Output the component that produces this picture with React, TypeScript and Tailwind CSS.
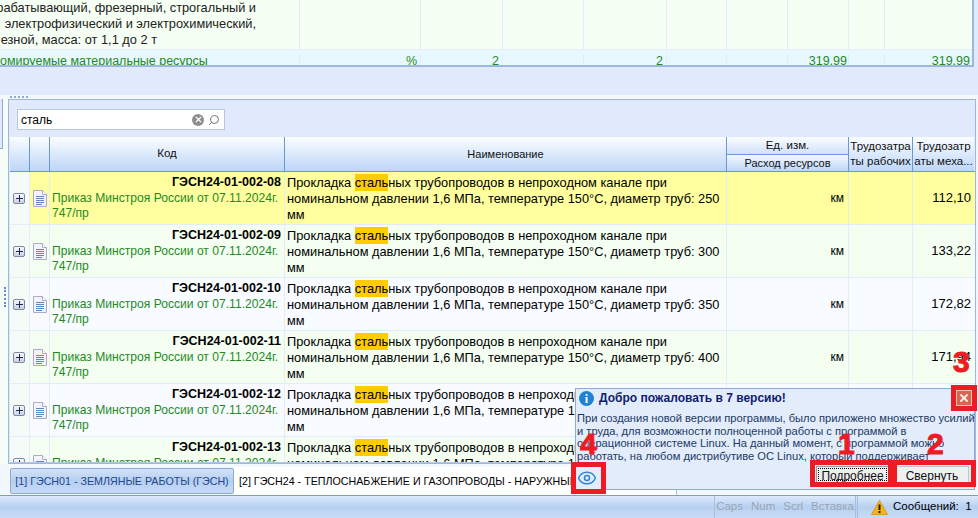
import React from 'react';
import { Eye, X, Search } from 'lucide-react';

const rows = [
  { code: 'ГЭСН24-01-002-08', d: '250', value: '112,10', bg: 'bg-[#ffff9f]' },
  { code: 'ГЭСН24-01-002-09', d: '300', value: '133,22', bg: 'bg-[#f4fff2]' },
  { code: 'ГЭСН24-01-002-10', d: '350', value: '172,82', bg: 'bg-[#f8fbff]' },
  { code: 'ГЭСН24-01-002-11', d: '400', value: '171,94', bg: 'bg-[#f4fff2]' },
  { code: 'ГЭСН24-01-002-12', d: '450', value: '199,10', bg: 'bg-[#f8fbff]' },
  { code: 'ГЭСН24-01-002-13', d: '500', value: '226,40', bg: 'bg-[#f4fff2]' },
];

const cell = 'border-r border-[#e3ecfa]';

const DocIcon = () => (
  <svg width="14" height="17" viewBox="0 0 14 17">
    <path d="M.5.5h9l4 4v12H.5z" fill="#f2f3fb" stroke="#a9acc4" />
    <path d="M9.5.5v4h4" fill="#fff" stroke="#a9acc4" />
    <g fill="#5f86c6">
      <rect x="3" y="6" width="8" height="1" />
      <rect x="3" y="8" width="8" height="1" />
      <rect x="3" y="10" width="8" height="1" />
      <rect x="3" y="12" width="8" height="1" />
      <rect x="3" y="14" width="6" height="1" />
    </g>
  </svg>
);

const Plus = () => (
  <div className="flex h-[11px] w-[12px] items-center justify-center rounded-[2px] border border-[#7d87a6] bg-gradient-to-b from-[#f8f9fc] to-[#c9d0e2]">
    <svg width="7" height="7" viewBox="0 0 7 7">
      <path d="M3 0h1v3h3v1H4v3H3V4H0V3h3z" fill="#1d2a55" />
    </svg>
  </div>
);

const Row = ({ code, d, value, bg }: (typeof rows)[number]) => (
  <div className={`flex h-[53px] shrink-0 border-b border-[#e3ecfa] ${bg}`}>
    <div className={`flex w-[20px] items-center justify-end pt-[1px] pr-[4px] ${cell} bg-[#f5fbf6]`}>
      <Plus />
    </div>
    <div className={`flex w-[20px] items-center justify-center ${cell}`}>
      <DocIcon />
    </div>
    <div className={`w-[235px] pt-[3px] pr-[3px] pl-[1px] leading-[15.5px] ${cell}`}>
      <div className="text-right text-[12.5px] font-bold text-black">{code}</div>
      <div className="pl-[1px] text-[12.1px] whitespace-nowrap text-[#1f8a1f]">Приказ Минстроя России от 07.11.2024г.</div>
      <div className="pl-[1px] text-[12.1px] text-[#1f8a1f]">747/пр</div>
    </div>
    <div className={`w-[442px] px-[2px] pt-[3px] text-[12.8px] leading-[16px] whitespace-nowrap text-black ${cell}`}>
      <div>
        Прокладка <span className="bg-[#ffcc00] py-[1px]">сталь</span>ных трубопроводов в непроходном канале при
      </div>
      <div>номинальном давлении 1,6 МПа, температуре 150°С, диаметр труб: {d}</div>
      <div>мм</div>
    </div>
    <div className={`flex w-[122px] items-center justify-end pr-[4px] text-black ${cell}`}>км</div>
    <div className={`w-[64px] ${cell}`} />
    <div className="flex w-[61px] items-center justify-end pr-[3px] text-[13px] text-black">{value}</div>
  </div>
);

const TopTable = () => (
  <div className="h-[67px] w-[974px] shrink-0 overflow-hidden border-r-2 border-b-2 border-[#9db8df] bg-[#f5fff3] text-[12.8px] text-[#222]">
    <div className="flex h-[50px] border-b border-[#e3ecfa]">
      <div className={`w-[300px] overflow-hidden leading-[16px] whitespace-nowrap ${cell}`}>
        <div className="flex w-[256px] justify-end">рабатывающий, фрезерный, строгальный и</div>
        <div className="flex w-[256px] justify-end">электрофизический и электрохимический,</div>
        <div className="flex w-[157px] justify-end">езной, масса: от 1,1 до 2 т</div>
      </div>
      <div className={`w-[121px] ${cell}`} />
      <div className={`w-[82px] ${cell}`} />
      <div className={`w-[81px] ${cell}`} />
      <div className={`w-[83px] ${cell}`} />
      <div className={`w-[60px] ${cell}`} />
      <div className={`w-[61px] ${cell}`} />
      <div className={`w-[61px] ${cell}`} />
      <div className={`w-[36px] ${cell}`} />
    </div>
    <div className="flex h-[15px] overflow-hidden bg-[#e8f8ff] pt-[4px] text-[12.5px] leading-[15px] text-[#1f8a1f]">
      <div className={`flex w-[300px] justify-start overflow-hidden whitespace-nowrap ${cell}`}>омируемые материальные ресурсы</div>
      <div className={`w-[121px] pr-[3px] text-right ${cell}`}>%</div>
      <div className={`w-[82px] pr-[3px] text-right ${cell}`}>2</div>
      <div className={`w-[81px] ${cell}`} />
      <div className={`w-[83px] pr-[3px] text-right ${cell}`}>2</div>
      <div className={`w-[60px] ${cell}`} />
      <div className={`w-[61px] ${cell}`} />
      <div className={`w-[61px] pr-[1px] text-right ${cell}`}>319,99</div>
      <div className={`w-[36px] ${cell}`} />
      <div className="w-[87px] pr-[2px] text-right">319,99</div>
    </div>
  </div>
);

const Header = () => (
  <div className="flex h-[35px] shrink-0 border-b border-[#6d97d4] text-[11.5px] text-[#111]">
    <div className="w-[20px] border-r border-[#6d97d4] bg-gradient-to-b from-[#fbfdff] to-[#bdd6f8]" />
    <div className="w-[20px] border-r border-[#6d97d4] bg-gradient-to-b from-[#fbfdff] to-[#bdd6f8]" />
    <div className="flex w-[235px] items-center justify-center border-r border-[#6d97d4] bg-gradient-to-b from-[#fbfdff] to-[#bdd6f8]">Код</div>
    <div className="flex w-[442px] items-center justify-center border-r border-[#6d97d4] bg-gradient-to-b from-[#fbfdff] to-[#bdd6f8] text-[11px]">Наименование</div>
    <div className="flex w-[122px] flex-col border-r border-[#6d97d4] text-center">
      <div className="h-[18px] border-b border-[#6d97d4] bg-gradient-to-b from-[#fbfdff] to-[#cfe1fa] leading-[17px]">Ед. изм.</div>
      <div className="flex-1 bg-gradient-to-b from-[#f3f8ff] to-[#bdd6f8] text-[11px] leading-[16px]">Расход ресурсов</div>
    </div>
    <div className="flex w-[64px] items-center justify-center border-r border-[#6d97d4] bg-gradient-to-b from-[#fbfdff] to-[#bdd6f8] text-center leading-[15px]">
      Трудозатра<br />ты рабочих
    </div>
    <div className="flex w-[61px] items-center justify-center bg-gradient-to-b from-[#fbfdff] to-[#bdd6f8] text-center leading-[15px] whitespace-nowrap">
      Трудозатр<br />аты меха...
    </div>
  </div>
);

const Tabs = () => (
  <div className="flex h-[32px] shrink-0 items-start border-b border-[#7c9dd0] bg-[#f3f8ff] pt-[4px] pl-[10px] text-[10.7px]">
    <div className="flex h-[26px] w-[224px] items-center justify-center rounded-[2px] border border-[#8eaad6] bg-gradient-to-b from-[#d2e2f8] via-[#b6cfef] to-[#c7dbf6] whitespace-nowrap text-[#24478f]">
      [1] ГЭСН01 - ЗЕМЛЯНЫЕ РАБОТЫ (ГЭСН)
    </div>
    <div className="-mt-[1px] flex h-[28px] w-[443px] items-center overflow-hidden border-r border-[#a9c0e2] bg-white pl-[5px] whitespace-nowrap text-black">
      [2] ГЭСН24 - ТЕПЛОСНАБЖЕНИЕ И ГАЗОПРОВОДЫ - НАРУЖНЫЕ СЕТИ (ГЭСН)
    </div>
  </div>
);

const StatusBar = () => (
  <div className="flex h-[22px] shrink-0 items-stretch justify-end bg-gradient-to-b from-[#dcebfc] via-[#b7d0f1] to-[#c8dcf6]">
    <div className="flex w-[142px] items-center justify-center gap-[8px] border-x border-[#a7bedd] text-[11.5px] whitespace-nowrap text-[#9aa5b3]">
      <span>Caps</span>
      <span>Num</span>
      <span>Scrl</span>
      <span>Вставка</span>
    </div>
    <div className="ml-[1px] flex w-[121px] items-center gap-[5px] border-l border-[#a7bedd] pl-[13px] text-[11.5px] whitespace-nowrap text-black">
      <svg width="17" height="15" viewBox="0 0 17 15">
        <path d="M8.5.5 16.5 14.5H.5z" fill="#f5b417" stroke="#e09a10" strokeLinejoin="round" />
        <rect x="7.5" y="4.5" width="2" height="5.5" fill="#2a1c00" />
        <rect x="7.5" y="11" width="2" height="2" fill="#2a1c00" />
      </svg>
      <span>Сообщений:&nbsp; 1</span>
    </div>
  </div>
);

const Popup = () => (
  <div className="absolute top-[388px] left-[575px] flex h-[102px] w-[400px] flex-col border border-[#8eaad6] bg-[#e2ecfb] pl-[1px]">
    <div className="flex h-[23px] shrink-0 items-start gap-[5px] pt-[2px] pl-[2px]">
      <div className="flex h-[15px] w-[15px] items-center justify-center rounded-full bg-[#1f82d6] font-['Liberation_Serif',serif] text-[12px] leading-none font-bold text-white">
        i
      </div>
      <span className="leading-[15px] font-bold text-[#10206e]">Добро пожаловать в 7 версию!</span>
    </div>
    <div className="h-[50px] shrink-0 overflow-hidden text-[11.15px] leading-[12.7px] whitespace-nowrap text-[#1d3a63]">
      <div>При создания новой версии программы, было приложено множество усилий</div>
      <div>и труда, для возможности полноценной работы с программой в</div>
      <div>операционной системе Linux. На данный момент, с программой можно</div>
      <div>работать, на любом дистрибутиве ОС Linux, который поддерживает</div>
    </div>
    <div className="mt-[4px] flex items-start pr-[5px]">
      <Eye size={20} strokeWidth={1.8} className="mt-[2px] text-[#2c86d8]" />
      <button className="ml-auto h-[17px] w-[73px] border border-[#9a9a9a] bg-[#eeeeee] text-[#111] outline-1 -outline-offset-3 outline-black outline-dotted">
        Подробнее
      </button>
      <button className="ml-[6px] h-[17px] w-[74px] border border-[#c4c4c4] bg-[#f0f0f0] text-[#111]">Свернуть</button>
    </div>
    <div className="absolute top-[1px] right-[2px] flex h-[16px] w-[16px] items-center justify-center border border-[#f4c4b8] bg-[#d9664f]">
      <X size={12} strokeWidth={4} className="text-[#fbeae6]" />
    </div>
  </div>
);

// red annotations drawn over the screenshot
const Marks = () => {
  const box = 'absolute border-[5px] border-[#ed1c24]';
  const num = "absolute font-['Liberation_Sans',sans-serif] text-[30px] leading-none font-bold text-[#ed1c24] [-webkit-text-stroke:1px_#ed1c24]";
  return (
    <>
      <div className={`${box} top-[385px] left-[951px] h-[26px] w-[26px]`} />
      <div className={`${box} top-[460px] left-[810px] h-[27px] w-[83px]`} />
      <div className={`${box} top-[460px] left-[892px] h-[27px] w-[84px]`} />
      <div className={`${box} top-[462px] left-[571px] h-[32px] w-[35px]`} />
      <span className={`${num} top-[429px] left-[838px]`}>1</span>
      <span className={`${num} top-[429px] left-[927px]`}>2</span>
      <span className={`${num} top-[347px] left-[953px]`}>3</span>
      <span className={`${num} top-[429px] left-[580px]`}>4</span>
    </>
  );
};

export default function App() {
  return (
    <div className="relative flex h-[518px] w-[978px] flex-col overflow-hidden bg-[#e0eafc] font-['Liberation_Sans',sans-serif] text-[12px]">
      <TopTable />
      <div className="h-[28px] shrink-0" />
      <div className="relative h-[4px] shrink-0 bg-[#f3f8ff]">
        <div className="absolute top-[1px] left-[10px] h-[2px] w-[18px] border-t-2 border-dotted border-[#8eaad6]" />
      </div>
      <div className="flex min-h-0 flex-1 bg-[#f3f8ff]">
        <div className="relative w-[8px] shrink-0 bg-[#f6fdf6]">
          <div className="h-[50px] w-[3px] border-r border-b border-[#8eaad6] bg-[#e0eafc]" />
          <div className="absolute top-[188px] left-[4px] h-[20px] w-[2px] border-l-2 border-dotted border-[#5f8fd0]" />
        </div>
        <div className="flex w-[968px] flex-col border border-[#9db8df] bg-[#e0eafc] pl-[1px]">
          <div className="flex h-[37px] shrink-0 items-center pt-[2px] pl-[7px]">
            <div className="flex h-[21px] w-[208px] items-center border border-[#b4c8e6] bg-white pr-[4px] pl-[3px]">
              <span className="flex-1 text-black">сталь</span>
              <div className="flex h-[12px] w-[12px] items-center justify-center rounded-full bg-[#8f8f8f]">
                <X size={9} strokeWidth={3} className="text-white" />
              </div>
              <Search size={12} className="ml-[4px] -scale-x-100 text-[#777]" />
            </div>
          </div>
          <Header />
          <div className="h-[291px] shrink-0 overflow-hidden border-b border-[#b4c8e6] bg-[#f3f8ff]">
            {rows.map((r) => (
              <Row key={r.code} {...r} />
            ))}
          </div>
        </div>
      </div>
      <Tabs />
      <StatusBar />
      <Popup />
      <Marks />
    </div>
  );
}
